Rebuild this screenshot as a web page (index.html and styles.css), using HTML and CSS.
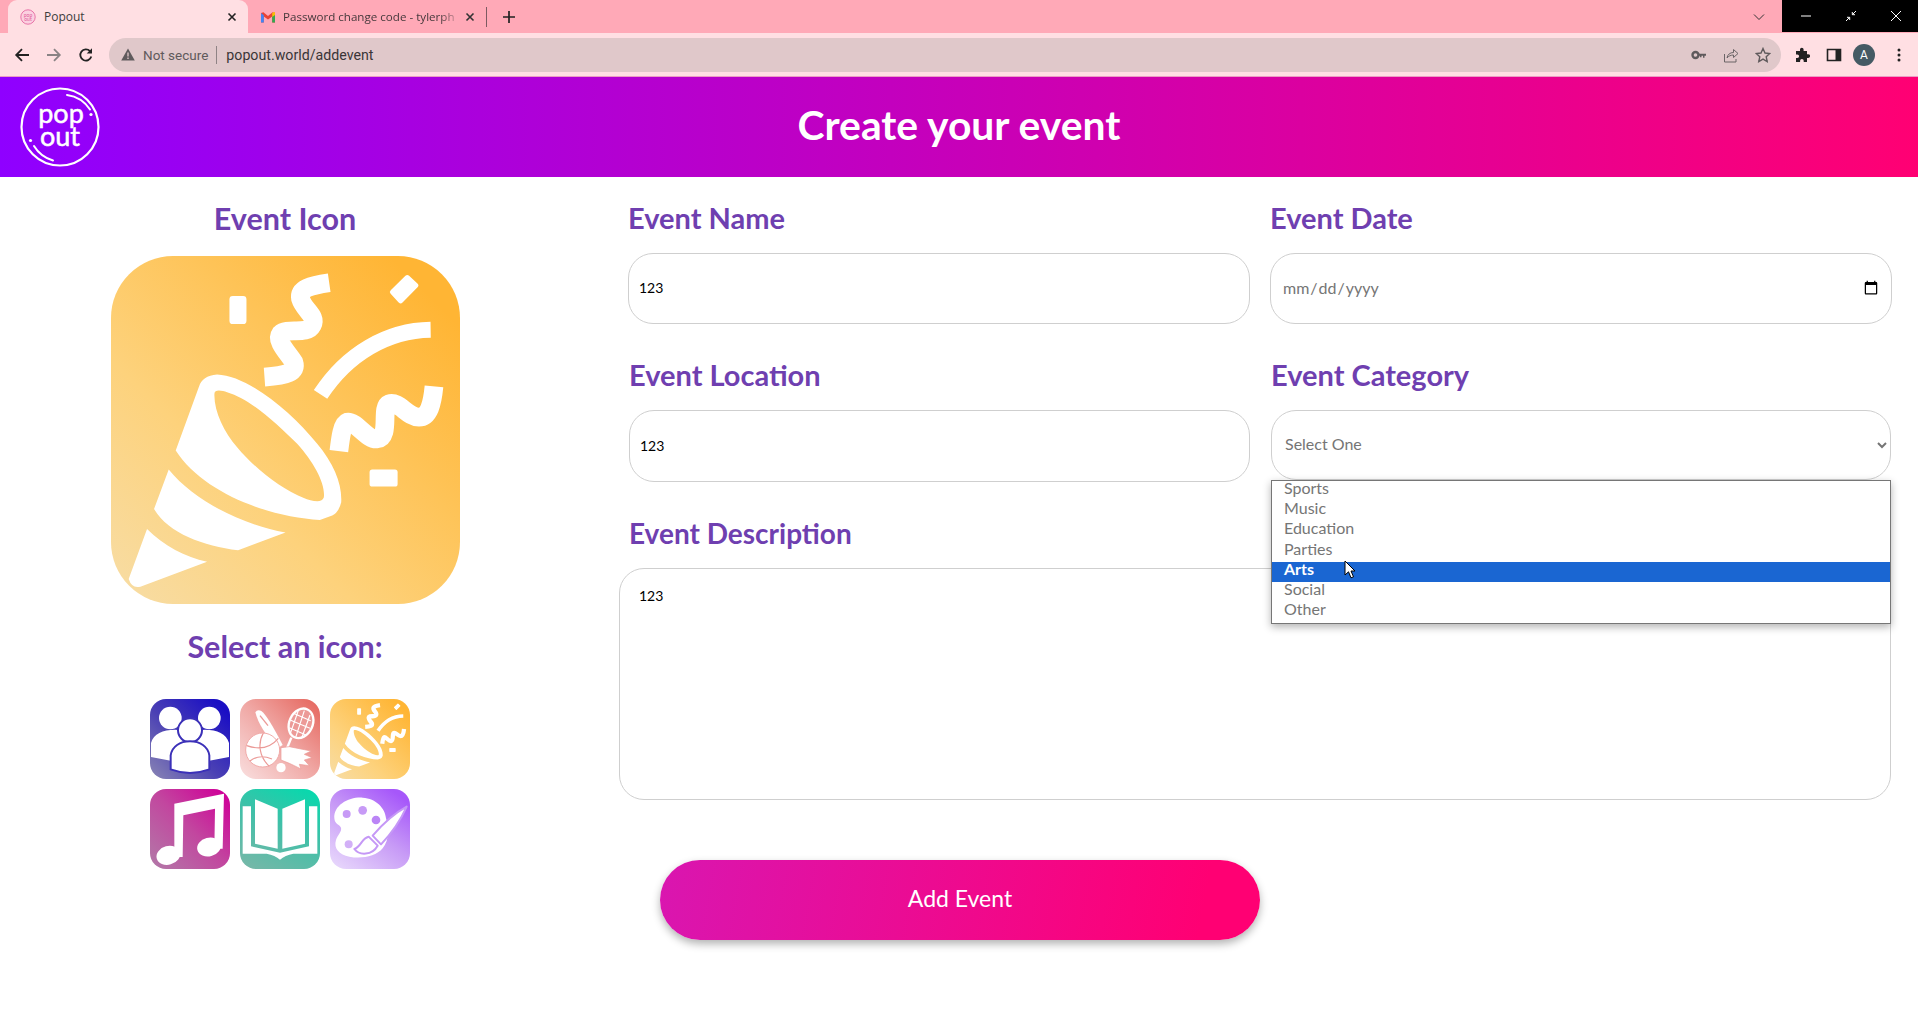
FILE: index.html
```html
<!DOCTYPE html>
<html lang="en">
<head>
<meta charset="utf-8">
<title>Popout</title>
<link rel="stylesheet" href="styles.css">
</head>
<body>
<div class="tabstrip">
  <div class="tab tab-active">
    <svg class="favicon favicon-first" viewBox="0 0 16 16"><circle cx="8" cy="8" r="7.2" fill="#fbd0e0" stroke="#e874a8" stroke-width="1"/><text x="8" y="7.5" text-anchor="middle" class="fav-text">pop</text><text x="8" y="12" text-anchor="middle" class="fav-text">out</text></svg>
    <span class="tab-title">Popout</span>
    <svg class="tab-close" viewBox="0 0 10 10"><path d="M1.5 1.5l7 7M8.5 1.5l-7 7" stroke="#222" stroke-width="1.6"/></svg>
  </div>
  <div class="tab tab-second">
    <svg class="favicon" viewBox="0 0 16 16"><path d="M1 13.5V4l2.4-.8L8 7l4.600-3.800L15 4v9.500h-2.800V7.500L8 10.500 3.800 7.500v6z" fill="#ea4335"/><path d="M1 13.500V4l2.800 2.200v7.300z" fill="#4285f4"/><path d="M15 13.500V4l-2.800 2.200v7.300z" fill="#34a853"/><path d="M12.200 6.200V3.700L15 3l0 3-2.800 2z" fill="#fbbc04"/></svg>
    <span class="tab-title tab-title-fade">Password change code - tylerph</span>
    <svg class="tab-close" viewBox="0 0 10 10"><path d="M1.500 1.500l7 7M8.500 1.500l-7 7" stroke="#333" stroke-width="1.600"/></svg>
  </div>
  <span class="tab-sep"></span>
  <svg class="new-tab" viewBox="0 0 14 14"><path d="M7 1v12M1 7h12" stroke="#222" stroke-width="1.700"/></svg>
  <svg class="tab-list" viewBox="0 0 12 8"><path d="M1 1.500l5 5 5-5" fill="none" stroke="#333" stroke-width="1"/></svg>
  <div class="win-controls">
    <svg class="win-btn" viewBox="0 0 12 12"><path d="M1 6h10" stroke="#fff" stroke-width="1"/></svg>
    <svg class="win-btn" viewBox="0 0 12 12"><path d="M11 1L7.500 4.500M7.300 2v2.700H10M1 11l3.500-3.500M4.700 10V7.300H2" fill="none" stroke="#fff" stroke-width="1"/></svg>
    <svg class="win-btn" viewBox="0 0 12 12"><path d="M1 1l10 10M11 1L1 11" stroke="#fff" stroke-width="1"/></svg>
  </div>
</div>
<div class="toolbar">
  <svg class="tool" viewBox="0 0 16 16"><path d="M15 8H2.500M8 2.200L2.200 8 8 13.800" fill="none" stroke="#222" stroke-width="1.800"/></svg>
  <svg class="tool" viewBox="0 0 16 16"><path d="M1 8h12.500M8 2.200L13.800 8 8 13.800" fill="none" stroke="#8a8385" stroke-width="1.800"/></svg>
  <svg class="tool" viewBox="0 0 16 16"><path d="M13.300 9.500A5.600 5.600 0 1 1 12 4.100" fill="none" stroke="#222" stroke-width="1.800"/><path d="M14 1.200v5.300H8.700z" fill="#222"/></svg>
  <div class="omnibox">
    <svg class="warn" viewBox="0 0 14 13"><path d="M7 .5L13.800 12.500H.2z" fill="#5f5a5c"/><path d="M7 4.500v4M7 9.500v1.500" stroke="#e0c8ca" stroke-width="1.300"/></svg>
    <span class="not-secure">Not secure</span>
    <span class="omni-sep"></span>
    <span class="url">popout.world/addevent</span>
    <span class="omni-spacer"></span>
    <svg class="omni-icon" viewBox="0 0 16 16"><circle cx="4.500" cy="8" r="3" fill="none" stroke="#5f5a5c" stroke-width="2.400"/><path d="M7 6.800h8v2h-1.500v2h-1.500v-2H10.500v1.500H9V8.800H7z" fill="#5f5a5c"/></svg>
    <svg class="omni-icon" viewBox="0 0 16 16"><path d="M1.500 7v8h11.500v-3M4 11c.5-3.500 3-5.500 6.500-5.500V2.500L15 6.500 10.500 10.500V8C8 8 5.500 9 4 11z" fill="none" stroke="#6b6567" stroke-width="1"/></svg>
    <svg class="omni-icon" viewBox="0 0 16 16"><path d="M8 1.500l2 4.500 4.800.5-3.600 3.200 1 4.800L8 12.100l-4.200 2.400 1-4.800L1.200 6.500 6 6z" fill="none" stroke="#5f5a5c" stroke-width="1.400"/></svg>
  </div>
  <svg class="tool tool-right" viewBox="0 0 16 16"><path d="M6 2.500a1.800 1.800 0 0 1 3.600 0V4H13v3.300h1.300a1.800 1.800 0 0 1 0 3.600H13V15H9.700v-1.300a1.800 1.800 0 0 0-3.600 0V15H2v-4h1.300a1.800 1.800 0 0 0 0-3.600H2V4h4z" fill="#222"/></svg>
  <svg class="tool" viewBox="0 0 16 16"><path d="M1.500 2.500h13v11h-13z" fill="none" stroke="#222" stroke-width="1.600"/><path d="M9.500 2.500h5v11h-5z" fill="#222"/></svg>
  <span class="avatar">A</span>
  <svg class="tool" viewBox="0 0 16 16"><circle cx="8" cy="3" r="1.500" fill="#222"/><circle cx="8" cy="8" r="1.500" fill="#222"/><circle cx="8" cy="13" r="1.500" fill="#222"/></svg>
</div>

<header class="banner">
  <svg class="logo" viewBox="0 0 82 82">
    <circle cx="40" cy="40" r="38.500" fill="none" stroke="#fff" stroke-width="2.200"/>
    <path d="M47 8a33 33 0 0 1 23 14.500M14 59a33 33 0 0 0 19 14.500" fill="none" stroke="#fff" stroke-width="2" stroke-linecap="round"/>
    <circle cx="71" cy="27.500" r="1.600" fill="#fff"/><circle cx="10.500" cy="53.500" r="1.600" fill="#fff"/>
    <text x="41" y="36" text-anchor="middle" class="logo-text">pop</text>
    <text x="40" y="59" text-anchor="middle" class="logo-text">out</text>
  </svg>
  <h1 class="banner-title">Create your event</h1>
</header>

<main class="content">
  <section class="icon-panel">
    <h2 class="heading heading-large">Event Icon</h2>
    <div class="app-icon app-icon-big grad-party">
      <svg class="glyph" viewBox="62 47 1046 1043"><use href="#party"/></svg>
    </div>
    <h2 class="heading heading-large heading-select">Select an icon:</h2>
    <div class="icon-grid">
      <div class="app-icon grad-people">
        <svg class="glyph" viewBox="60 57 240 238">
          <circle cx="121" cy="113" r="34" fill="#fff"/><circle cx="238" cy="113" r="34" fill="#fff"/>
          <path d="M63 230v-42c8-28 35-40 72-40 50 0 55 40 55 40v60l-60-5zM297 230v-42c-8-28-35-40-72-40-50 0-55 40-55 40v60l60-5z" fill="#fff"/>
          <circle cx="180" cy="150" r="36" fill="#fff" stroke="#3b30b8" stroke-width="6"/>
          <path d="M122 267v-42c4-27 28-42 58-42s54 15 58 42v42c-38 14-78 14-116 0z" fill="#fff" stroke="#3b30b8" stroke-width="6"/>
        </svg>
      </div>
      <div class="app-icon grad-sports">
        <svg class="glyph" viewBox="12 12 240 240">
          <path d="M58 52Q64 42 76 48Q95 62 140 150L124 160Q70 100 58 52Z" fill="#fff"/>
          <path d="M72 62L96 92" stroke="#ec9a97" stroke-width="4"/>
          <circle cx="80" cy="165" r="51" fill="#fff" stroke="#f0aaa8" stroke-width="3"/>
          <path d="M32 152c35 12 70 8 95-22M82 114c-18 32-12 72 18 100M42 198c20-16 42-16 66-6" fill="none" stroke="#eb9a97" stroke-width="3.500"/>
          <ellipse cx="195" cy="85" rx="35" ry="46" transform="rotate(25 195 85)" fill="#ec9a97" stroke="#fff" stroke-width="7"/>
          <path d="M172 55l52 22M164 76l58 24M160 98l50 22M188 44l-26 74M205 47l-26 80M222 60l-24 66" stroke="#fff" stroke-width="3.500"/>
          <path d="M166 128l-14 34" stroke="#fff" stroke-width="7"/>
          <path d="M135 158L160 155 225 168 205 178 228 188 205 195 220 212 190 208 195 222 175 212 160 205 135 195Z" fill="#fff" stroke="#eb9a97" stroke-width="2"/>
          <circle cx="135" cy="218" r="14" fill="#fff"/>
        </svg>
      </div>
      <div class="app-icon grad-party">
        <svg class="glyph" viewBox="62 47 1046 1043">
          <defs>
            <g id="party">
              <path fill-rule="evenodd" d="M256 630L325 440Q335 405 380 402C470 405 600 510 680 610C730 670 755 730 752 785Q745 815 725 825L688 838C540 830 340 760 256 630ZM372 460C372 445 395 450 410 455C480 475 560 550 620 610C670 665 705 730 700 770C695 790 660 780 640 772C570 745 490 680 440 620C400 575 370 510 372 460Z" fill="#fff"/>
              <path d="M235 687C310 780 450 850 585 876L443 929C340 915 235 880 191 805Z" fill="#fff"/>
              <path d="M170 865C220 915 285 950 350 963L150 1038Q125 1045 115 1015Z" fill="#fff"/>
              <rect x="417" y="167" width="51" height="84" rx="10" fill="#fff"/>
              <rect x="837" y="687" width="84" height="51" rx="8" fill="#fff"/>
              <path d="M950 112L975 135 930 181 906 155Z" fill="#fff" stroke="#fff" stroke-width="16" stroke-linejoin="round"/>
              <path d="M716 127C660 135 625 145 630 175C640 210 680 225 665 255C650 285 590 260 570 280C555 300 590 335 610 365C620 395 590 405 522 410" fill="none" stroke="#fff" stroke-width="56"/>
              <path d="M1020 268C890 270 770 340 690 462" fill="none" stroke="#fff" stroke-width="48"/>
              <path d="M1030 438C1025 490 1015 530 985 530C950 530 925 480 895 490C870 500 900 590 860 595C830 600 795 540 770 545C755 550 750 590 745 632" fill="none" stroke="#fff" stroke-width="56"/>
            </g>
          </defs>
          <use href="#party"/>
        </svg>
      </div>
      <div class="app-icon grad-music">
        <svg class="glyph" viewBox="60 327 240 238">
          <ellipse cx="115" cy="525" rx="36" ry="28" transform="rotate(-15 115 525)" fill="#fff"/>
          <ellipse cx="237" cy="500" rx="36" ry="28" transform="rotate(-15 237 500)" fill="#fff"/>
          <path d="M133 370L282 340 278 505H253L255 385 160 405 158 530H133Z" fill="#fff"/>
        </svg>
      </div>
      <div class="app-icon grad-book">
        <svg class="glyph" viewBox="330 327 240 238">
          <path d="M375 357L443 385V505L375 490Z" fill="#fff"/>
          <path d="M457 385L525 357V490L457 505Z" fill="#fff"/>
          <path d="M338 378H363V498L450 517 537 498V378H562V520H490Q465 525 450 538 435 525 410 520H338Z" fill="#fff"/>
        </svg>
      </div>
      <div class="app-icon grad-palette">
        <svg class="glyph" viewBox="12 12 240 240">
          <path d="M25 100C22 60 70 35 110 38C150 40 178 70 180 100C190 130 190 165 170 190C150 215 105 222 70 215C40 210 22 190 30 165C35 150 48 140 45 128C40 118 26 118 25 100Z" fill="#fff"/>
          <circle cx="62" cy="87" r="12" fill="#c79af6"/><circle cx="110" cy="76" r="13" fill="#c79af6"/><circle cx="150" cy="105" r="13" fill="#bb85f6"/><circle cx="68" cy="178" r="12" fill="#d2b0f7"/>
          <path d="M242 65C222 110 192 150 165 178L140 152C170 117 205 85 242 65Z" fill="#fff" stroke="#c598f6" stroke-width="6" stroke-linejoin="round"/>
          <path d="M128 155C106 160 106 185 85 192C100 212 138 212 155 182Z" fill="#fff" stroke="#c598f6" stroke-width="6" stroke-linejoin="round"/>
        </svg>
      </div>
    </div>
  </section>

  <form class="event-form">
    <div class="field-grid">
      <div class="field">
        <label class="heading">Event Name</label>
        <input class="control" type="text" value="123">
      </div>
      <div class="field">
        <label class="heading">Event Date</label>
        <input class="control control-date" type="date">
      </div>
      <div class="field field-nudge">
        <label class="heading">Event Location</label>
        <input class="control control-tall" type="text" value="123">
      </div>
      <div class="field field-nudge field-select">
        <label class="heading">Event Category</label>
        <select class="control control-select">
          <option>Select One</option>
        </select>
        <ul class="dropdown">
          <li class="option">Sports</li>
          <li class="option">Music</li>
          <li class="option">Education</li>
          <li class="option">Parties</li>
          <li class="option option-active">Arts</li>
          <li class="option">Social</li>
          <li class="option">Other</li>
        </ul>
        <svg class="cursor" viewBox="0 0 12 19"><path d="M1 1v14l3.500-3.200 2.500 6 2.500-1-2.500-5.800H11z" fill="#fff" stroke="#000" stroke-width="1"/></svg>
      </div>
    </div>
    <label class="heading heading-desc">Event Description</label>
    <textarea class="control control-area">123</textarea>
    <button class="submit" type="button">Add Event</button>
  </form>
</main>
</body>
</html>
```
FILE: styles.css
```css
* { box-sizing: border-box; }
html, body { margin: 0; padding: 0; height: 100%; overflow: hidden; background: #fff; }
body { font-family: "Lato", "Liberation Sans", sans-serif; }

/* browser chrome */
.tabstrip { height: 33px; background: #ffa9b7; display: flex; align-items: center; padding-left: 8px; }
.tab { height: 33px; display: flex; align-items: center; font-family: "Open Sans", sans-serif; font-size: 12px; color: #3c3c3c; }
.tab-active { width: 240px; background: #ffdfe3; border-radius: 9px 9px 0 0; padding: 0 11px 0 12px; }
.tab-second { width: 238px; padding: 0 11px 0 12px; color: #45383b; }
.favicon { width: 16px; height: 16px; flex: none; margin-right: 7px; }
.favicon-first { margin-right: 8px; }
.fav-text { font-size: 5px; fill: #e05a98; font-family: "Lato", sans-serif; }
.tab-title { flex: 1; white-space: nowrap; }
.tab-title-fade { font-size: 11.600px; -webkit-mask-image: linear-gradient(90deg, #000 90%, rgba(0,0,0,.2) 100%); mask-image: linear-gradient(90deg, #000 90%, rgba(0,0,0,.2) 100%); }
.tab-close { width: 10px; height: 10px; flex: none; margin-left: 8px; }
.tab-sep { width: 1px; height: 20px; background: #7d5a62; flex: none; }
.new-tab { width: 14px; height: 14px; margin-left: 15px; flex: none; }
.tab-list { width: 12px; height: 8px; margin-left: auto; margin-right: 17px; flex: none; }
.win-controls { width: 136px; height: 32px; align-self: flex-start; background: #000; display: flex; align-items: center; justify-content: space-between; padding: 0 16px 0 18px; }
.win-btn { width: 12px; height: 12px; }

.toolbar { height: 44px; background: #ffdfe3; border-bottom: 1px solid #ec9cc4; display: flex; align-items: center; padding-left: 14px; }
.tool { width: 16px; height: 16px; flex: none; margin-right: 16px; }
.omnibox { width: 1672px; height: 34px; margin-left: -1px; margin-right: 13px; border-radius: 17px; background: #e0c8ca; display: flex; align-items: center; padding: 0 10px 0 12px; font-family: "Roboto", sans-serif; font-size: 13.500px; flex: none; }
.warn { width: 14px; height: 13px; flex: none; margin-right: 8px; }
.not-secure { color: #5f5a5c; }
.omni-sep { width: 1px; height: 18px; background: #8f8385; margin: 0 9px 0 8px; }
.url { color: #3a3537; font-size: 14.200px; }
.omni-spacer { flex: 1; }
.omni-icon { width: 16px; height: 16px; margin-left: 16px; flex: none; }
.tool-right { margin-left: 0; }
.avatar { width: 22px; height: 22px; border-radius: 50%; background: #455a64; color: #fff; font-family: "Roboto", sans-serif; font-size: 12px; line-height: 22px; text-align: center; flex: none; margin-right: 16px; margin-left: -5px; }

/* banner */
.banner { height: 100px; background: linear-gradient(90deg, #8f00ff 0%, #ff0073 100%); display: flex; align-items: center; justify-content: center; position: relative; }
.logo { position: absolute; left: 20px; top: 10px; width: 82px; height: 82px; }
.logo-text { font-family: "Lato", sans-serif; font-size: 27px; font-weight: 400; fill: #fff; stroke: #fff; stroke-width: .5; }
.banner-title { margin: 0 0 5px; color: #fff; font-size: 40.800px; font-weight: 700; line-height: 50px; }

/* content */
.content { display: flex; align-items: flex-start; }
.heading { display: block; margin: 0; color: #6f3fb0; font-size: 29px; font-weight: 700; line-height: 40px; }
.heading-large { font-size: 30.500px; line-height: 38px; }

.icon-panel { width: 570px; flex: none; padding-top: 22px; display: flex; flex-direction: column; align-items: center; }
.heading-select { margin-top: 23px; }
.app-icon { width: 80px; height: 80px; border-radius: 16px; overflow: hidden; }
.app-icon-big { width: 349px; height: 348px; border-radius: 62px; margin-top: 19px; }
.glyph { display: block; width: 100%; height: 100%; }
.icon-grid { display: grid; grid-template-columns: repeat(3, 80px); gap: 10px; margin: 34px 0 0 -10px; }
.grad-party { background: linear-gradient(45deg, #f7dda6 0%, #fdd27c 35%, #ffb534 90%); }
.grad-people { background: linear-gradient(45deg, #8a86b4 0%, #4a40b4 45%, #1a0ec4 90%); }
.grad-sports { background: linear-gradient(45deg, #f9dfdf 0%, #f0a8a5 50%, #e66a62 95%); }
.grad-music { background: linear-gradient(45deg, #b27aa8 0%, #c2479f 50%, #cf0098 95%); }
.grad-book { background: linear-gradient(25deg, #7ab7a8 0%, #3fc0a8 55%, #00dcae 100%); }
.grad-palette { background: linear-gradient(35deg, #eadcfc 0%, #c79af6 50%, #a657fa 90%); }

.event-form { width: 1272px; margin-left: 49px; padding-top: 21px; display: flex; flex-direction: column; align-items: flex-start; }
.field-grid { display: grid; grid-template-columns: 622px 622px; column-gap: 20px; row-gap: 31px; margin-left: 9px; }
.field { display: flex; flex-direction: column; }
.field-nudge { margin-left: 1px; }
.field-select { position: relative; margin-right: 1px; }
.control { display: block; width: 100%; height: 71px; margin-top: 15px; padding: 0 10px 2px; border: 1px solid #cfcfcf; border-radius: 25px; background: #fff; color: #000; font-family: "Lato", sans-serif; font-size: 14px; outline: none; }
.control-tall { height: 72px; }
.control-date { color: #757575; padding: 0 10px 2px 11px; font-size: 16px; }
.control-select { height: 70px; margin-top: 15px; padding: 0 0 4px 9px; color: #757575; font-size: 16px; }
.control-area { width: 1272px; height: 232px; margin-top: 15px; padding: 18px 19px; resize: none; }
.heading-desc { margin-top: 31px; margin-left: 10px; font-size: 28px; }

.dropdown { position: absolute; left: 0; right: 0; top: 125px; margin: 0; padding: 0; list-style: none; height: 144px; background: #fff; border: 1px solid #767676; box-shadow: 0 3px 8px rgba(0,0,0,.3); z-index: 2; }
.option { height: 20.200px; line-height: 13px; padding-left: 12px; font-size: 16px; color: #757575; }
.option-active { background: #1a66d2; color: #fff; font-weight: 700; }
.cursor { position: absolute; left: 73px; top: 205px; width: 12px; height: 19px; z-index: 3; }

.submit { width: 600px; height: 80px; margin: 60px 0 0 41px; padding: 0 0 5px; border: 0; border-radius: 40px; background: linear-gradient(100deg, #d916b0 0%, #ff0073 90%); box-shadow: 0 4px 8px rgba(0,0,0,.3); color: #fff; font-family: "Lato", sans-serif; font-size: 23px; font-weight: 400; }
```
